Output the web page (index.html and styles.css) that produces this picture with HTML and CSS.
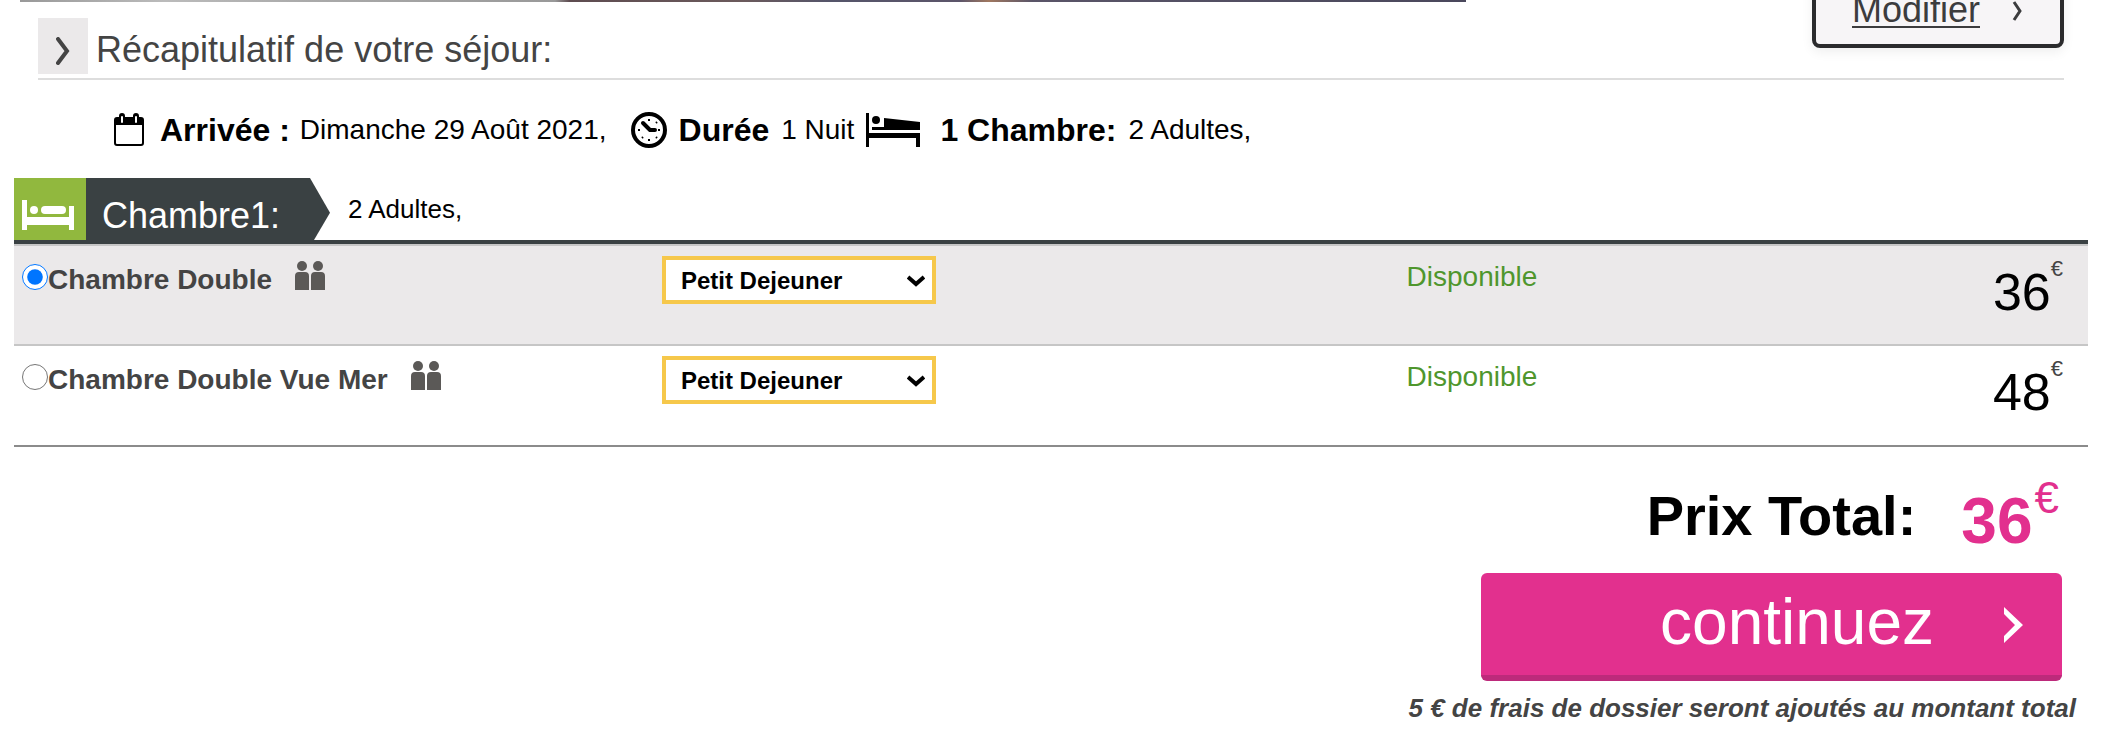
FILE: index.html
```html
<!DOCTYPE html>
<html lang="fr">
<head>
  <meta charset="UTF-8">
  <meta name="viewport" content="width=device-width, initial-scale=1.0">
  <title>Réservation</title>
  <link rel="stylesheet" href="styles.css">
</head>
<body>
  <main>
    <div class="photo"></div>

    <header class="recap">
      <span class="chip">
        <svg width="14" height="28" viewBox="0 0 14 28"><path d="M2 2l9 12-9 12" fill="none" stroke="currentColor" stroke-width="4" stroke-linecap="round"/></svg>
      </span>
      <h1>Récapitulatif de votre séjour:</h1>
      <a href="#" class="modify">
        <span>Modifier</span>
        <svg width="12" height="20" viewBox="0 0 12 20"><path d="M2 1l6 9-6 9" fill="none" stroke="currentColor" stroke-width="3"/></svg>
      </a>
    </header>

    <div class="infos">
      <div class="info info-date">
        <svg width="30" height="34" viewBox="0 0 30 34">
          <rect x="1" y="5" width="28" height="27" rx="2" fill="#fff" stroke="#000" stroke-width="2"/>
          <path d="M1 5h28v7H1z"/>
          <path d="M8 3v6M22 3v6" stroke="#000" stroke-width="6" stroke-linecap="round"/>
          <path d="M8 4v5M22 4v5" stroke="#fff" stroke-width="2" stroke-linecap="round"/>
        </svg>
        <strong>Arrivée :</strong>
        <span>Dimanche 29 Août 2021,</span>
      </div>
      <div class="info info-time">
        <svg width="36" height="36" viewBox="0 0 36 36">
          <circle cx="18" cy="18" r="16" fill="none" stroke="#000" stroke-width="4"/>
          <path d="M12 11l7 7h5" fill="none" stroke="#000" stroke-width="4" stroke-linecap="round" stroke-linejoin="round"/>
          <path d="M18 7v2M18 27v2M7 18h2M27 18h2M12 25l-1 1M25 25l1 1M25 11l1-1" fill="none" stroke="#000" stroke-width="2"/>
        </svg>
        <strong>Durée</strong>
        <span>1 Nuit</span>
      </div>
      <div class="info info-room">
        <svg width="54" height="34" viewBox="0 0 54 34">
          <path d="M0 0h3v20h51v14h-4V25H3v9H0z"/>
          <circle cx="10" cy="7" r="4"/>
          <path d="M18 5l36 4v8H6v-3h12z"/>
        </svg>
        <strong>1 Chambre:</strong>
        <span>2 Adultes,</span>
      </div>
    </div>

    <form action="#">
      <div class="room-head">
        <span class="room-icon">
          <svg width="54" height="32" viewBox="0 0 54 32" fill="#fff">
            <path d="M1 1h5v17h42V7h5v24h-5v-5H6v5H1z"/>
            <circle cx="13" cy="11" r="4"/>
            <rect x="20" y="7" width="25" height="8" rx="4"/>
          </svg>
        </span>
        <h2>Chambre1:</h2>
        <p>2 Adultes,</p>
      </div>

      <table class="rooms">
        <tr class="selected">
          <td class="name">
            <div class="choice">
              <input type="radio" name="room" id="room1" checked>
              <label for="room1">Chambre Double</label>
              <svg class="people" width="32" height="30" viewBox="0 0 32 30"><circle cx="8" cy="6" r="5"/><circle cx="24" cy="6" r="5"/><path d="M1 30V16q0-4 4-4h6q4 0 4 4v14zM17 30V16q0-4 4-4h6q4 0 4 4v14z"/></svg>
            </div>
          </td>
          <td class="board">
            <div class="select">
              <select aria-label="Pension">
                <option>Petit Dejeuner</option>
              </select>
              <svg width="18" height="12" viewBox="0 0 18 12"><path d="M1 2l8 7 8-7" fill="none" stroke="#000" stroke-width="4"/></svg>
            </div>
          </td>
          <td class="status">Disponible</td>
          <td class="price"><div>36<small>€</small></div></td>
        </tr>
        <tr>
          <td class="name">
            <div class="choice">
              <input type="radio" name="room" id="room2">
              <label for="room2">Chambre Double Vue Mer</label>
              <svg class="people" width="32" height="30" viewBox="0 0 32 30"><circle cx="8" cy="6" r="5"/><circle cx="24" cy="6" r="5"/><path d="M1 30V16q0-4 4-4h6q4 0 4 4v14zM17 30V16q0-4 4-4h6q4 0 4 4v14z"/></svg>
            </div>
          </td>
          <td class="board">
            <div class="select">
              <select aria-label="Pension">
                <option>Petit Dejeuner</option>
              </select>
              <svg width="18" height="12" viewBox="0 0 18 12"><path d="M1 2l8 7 8-7" fill="none" stroke="#000" stroke-width="4"/></svg>
            </div>
          </td>
          <td class="status">Disponible</td>
          <td class="price"><div>48<small>€</small></div></td>
        </tr>
      </table>

      <div class="summary">
        <p class="total">
          <span>Prix Total:</span>
          <strong>36</strong><sup>€</sup>
        </p>
        <button type="submit" class="continue">
          <span>continuez</span>
          <svg width="22" height="38" viewBox="0 0 22 38"><path d="M2 1v7l11 11L2 30v7l19-18z" fill="#fff"/></svg>
        </button>
        <p class="note">5 € de frais de dossier seront ajoutés au montant total</p>
      </div>
    </form>
  </main>
</body>
</html>
```
FILE: styles.css
```css
:root {
  --clr-dark: #3a4143;
  --clr-text: #444;
  --clr-pink: #e2308e;
  --clr-green: #91b83e;
  --clr-yellow: #f6c84b;
  --clr-grey: #ebe9ea;
}

* {
  padding: 0;
  margin: 0;
  box-sizing: border-box;
}

body {
  font-family: "Liberation Sans", Arial, sans-serif;
  font-size: 28px;
  line-height: 32px;
  background-color: #fff;
  color: #000;
}

main {
  padding: 0 26px 0 14px;
}

.photo {
  width: calc(70% - 6px);
  height: 2px;
  margin-left: 6px;
  background: linear-gradient(90deg, #999 0%, #bbb 10%, #aaa 20%, #999 37%, #5e4c50 38%, #6b5a5c 50%, #55556a 56%, #5c556a 65%, #a07860 67%, #5a5568 70%, #4a485c 100%);
}

.recap {
  display: flex;
  align-items: flex-end;
  height: 78px;
  margin: 0 24px;
  padding-bottom: 4px;
  border-bottom: 2px solid #ddd;
  color: var(--clr-text);
}

.chip {
  display: flex;
  align-items: center;
  justify-content: center;
  width: 50px;
  height: 56px;
  padding-top: 10px;
  background-color: var(--clr-grey);
}

.recap h1 {
  flex-grow: 1;
  margin-left: 8px;
  font-size: 36px;
  font-weight: 400;
  line-height: 48px;
}

.modify {
  display: flex;
  align-items: center;
  align-self: flex-start;
  gap: 32px;
  width: 252px;
  height: 74px;
  margin-top: -28px;
  padding: 0 36px;
  border: 4px solid #2b2b2d;
  border-radius: 8px;
  background-color: #f7f5f7;
  box-shadow: 0 4px 12px #0001;
  color: #3c3c3e;
  font-size: 36px;
  text-decoration: none;
}

.modify span {
  border-bottom: 2px solid;
  line-height: 32px;
}

.infos {
  display: flex;
  padding: 32px 0 0 100px;
}

.info {
  display: flex;
  align-items: center;
  height: 36px;
}

.info strong {
  font-size: 32px;
}

.info-date strong {
  margin: 0 10px 0 16px;
}

.info-time {
  margin-left: 24px;
}

.info-time strong {
  margin: 0 12px;
}

.info-room {
  margin-left: 12px;
}

.info-room strong {
  margin: 0 12px 0 20px;
}

.room-head {
  display: flex;
  height: 66px;
  margin-top: 30px;
  border-bottom: 4px solid var(--clr-dark);
}

.room-icon {
  display: flex;
  align-items: center;
  justify-content: center;
  width: 72px;
  padding: 12px 4px 0 0;
  background-color: var(--clr-green);
}

.room-head h2 {
  width: 244px;
  padding-left: 16px;
  background-color: var(--clr-dark);
  clip-path: polygon(0 0, 224px 0, 100% 56%, 228px 100%, 0 100%);
  color: #fff;
  font-size: 36px;
  font-weight: 400;
  line-height: 76px;
}

.room-head p {
  margin-left: 18px;
  font-size: 26px;
  line-height: 62px;
}

.rooms {
  width: 100%;
  border-collapse: collapse;
  table-layout: fixed;
  border-bottom: 2px solid #8b8b8b;
}

.rooms tr {
  height: 101px;
  border-top: 2px solid #c6c6c6;
}

.rooms .selected {
  height: 100px;
  background-color: var(--clr-grey);
}

.rooms td {
  vertical-align: top;
}

.rooms .name {
  width: 31%;
  padding: 14px 0 0 8px;
}

.choice {
  display: flex;
  align-items: flex-start;
}

.choice input {
  width: 26px;
  height: 26px;
  margin-top: 4px;
}

.choice label {
  padding-top: 4px;
  color: var(--clr-text);
  font-weight: 700;
}

.people {
  margin-left: 22px;
  fill: #5b5957;
}

.rooms .board {
  width: 36%;
  padding: 10px 0 0 5px;
}

.select {
  position: relative;
  width: 274px;
}

.select select {
  display: block;
  appearance: none;
  width: 100%;
  height: 48px;
  padding: 0 15px;
  border: 4px solid var(--clr-yellow);
  border-radius: 0;
  background-color: #fff;
  color: #000;
  font: 700 24px "Liberation Sans", Arial, sans-serif;
}

.select svg {
  position: absolute;
  top: 19px;
  right: 11px;
  pointer-events: none;
}

.rooms .status {
  padding: 15px 0 0 3px;
  color: #4f962d;
}

.rooms .price {
  padding: 14px 25px 0 0;
}

.price div {
  display: flex;
  align-items: flex-start;
  justify-content: flex-end;
  font-size: 52px;
  line-height: 64px;
}

.price small {
  color: var(--clr-text);
  font-size: 22px;
  line-height: 18px;
}

.summary {
  display: flex;
  flex-direction: column;
  align-items: flex-end;
}

.total {
  display: flex;
  align-items: flex-start;
  margin: 32px 29px 0 0;
}

.total span {
  margin-right: 45px;
  font-size: 56px;
  font-weight: 700;
  line-height: 74px;
}

.total strong {
  color: var(--clr-pink);
  font-size: 64px;
  line-height: 84px;
}

.total sup {
  margin-left: 2px;
  color: var(--clr-pink);
  font-size: 44px;
  line-height: 38px;
}

.continue {
  display: flex;
  align-items: center;
  justify-content: flex-end;
  gap: 68px;
  width: 28%;
  height: 108px;
  margin: 10px 26px 0 0;
  padding: 0 38px 4px 0;
  border: 0;
  border-bottom: 6px solid #bd2a7b;
  border-radius: 6px;
  background-color: var(--clr-pink);
  color: #fff;
  font: 64px "Liberation Sans", Arial, sans-serif;
}

.continue svg {
  margin-top: 6px;
}

.note {
  margin: 11px 12px 0 0;
  color: var(--clr-text);
  font-size: 26px;
  font-style: italic;
  font-weight: 700;
}
```
